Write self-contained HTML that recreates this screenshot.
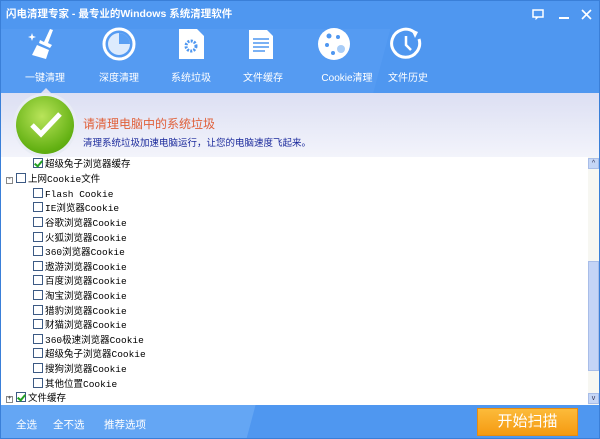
<!DOCTYPE html>
<html><head><meta charset="utf-8"><style>
*{margin:0;padding:0;box-sizing:border-box}
body{width:600px;height:439px;overflow:hidden;font-family:"Liberation Sans","Noto Sans CJK SC",sans-serif;position:relative;background:#fff}
.top{position:absolute;left:0;top:0;width:600px;height:93px;background:#4f97f0;border:1px solid #3a7fd8;border-bottom:none;overflow:hidden}
.title{position:absolute;left:5px;top:5px;color:#fff;font-size:10.5px;font-weight:bold}
.tab{position:absolute;top:68px;width:80px;text-align:center;color:#fff;font-size:10px;transform:translateX(-40px)}
.ic{position:absolute;top:26px;transform:translateX(-17px)}
.head{position:absolute;left:0;top:93px;width:600px;height:64px;background:linear-gradient(#dcdff3,#f3f4fb);border-left:1px solid #3a7fd8;border-right:1px solid #3a7fd8}
.list{position:absolute;left:0;top:157px;width:600px;height:248px;background:#fff;border-left:1px solid #3a7fd8;border-right:1px solid #3a7fd8}
.row{position:absolute;height:14px;font-size:9.5px;color:#000;font-family:"Liberation Mono","Noto Sans CJK SC",monospace;line-height:14px;white-space:nowrap}
.cb{display:inline-block;width:10px;height:10px;border:1px solid #3c5a84;background:#fff;vertical-align:-1px;margin-right:2px;position:relative}
.ck:after{content:"";position:absolute;left:2px;top:0px;width:3px;height:6px;border:solid #21a121;border-width:0 2px 2px 0;transform:rotate(40deg)}
.exp{display:inline-block;width:7px;height:7px;border:1px solid #888;font-size:7px;line-height:5px;text-align:center;margin-right:3px;vertical-align:1px;color:#333}
.foot{position:absolute;left:0;top:405px;width:600px;height:34px;background:#4f97f0;border:1px solid #3a7fd8;border-top:none;overflow:hidden}
.fl{position:absolute;top:12px;color:#fff;font-size:10.5px}
.btn{position:absolute;left:476px;top:3px;width:101px;height:28px;background:linear-gradient(#fcbb3a,#f59a12);border:1px solid #e78c10;color:#fff;font-size:15px;text-align:center;line-height:26px}
</style></head><body>
<div class="top">
<div style="position:absolute;left:-20px;top:28px;width:400px;height:70px;background:#559bf2;transform:skewX(-15deg)"></div>
<div class="title">闪电清理专家 - 最专业的Windows 系统清理软件</div>
<svg style="position:absolute;left:531px;top:8px" width="12" height="11"><rect x="1" y="1" width="10" height="7" fill="none" stroke="#fff" stroke-width="1.5"/><path d="M4 8v2l2-2" fill="#fff" stroke="#fff"/></svg>
<div style="position:absolute;left:558px;top:16px;width:10px;height:2px;background:#fff"></div>
<svg style="position:absolute;left:580px;top:8px" width="11" height="11"><path d="M1 1L10 10M10 1L1 10" stroke="#fff" stroke-width="1.6"/></svg>
<svg class="ic" style="left:44px" width="34" height="34"><path d="M22 2l3 1-5 13 4 2-2 3-11-5 1-3 4 2z" fill="#fff"/><path d="M9 18l12 5-3 9-14-4z" fill="#fff"/><path d="M4 6l1 3 3 1-3 1-1 3-1-3-3-1 3-1z" fill="#fff"/></svg>
<svg class="ic" style="left:118px" width="34" height="34"><circle cx="17" cy="17" r="15" fill="none" stroke="#fff" stroke-width="3"/><circle cx="17" cy="17" r="11" fill="#fff" opacity=".8"/><path d="M17 6a11 11 0 0 1 11 11H17z" fill="#5a9ff3"/></svg>
<svg class="ic" style="left:190px" width="34" height="34"><path d="M5 2h18l7 7v23H5z" fill="#fff"/><circle cx="17" cy="19" r="5" fill="none" stroke="#4f97f0" stroke-width="3" stroke-dasharray="2 1.3"/></svg>
<svg class="ic" style="left:261px" width="34" height="34"><path d="M4 3h18l6 6v23H4z" fill="#fff"/><path d="M8 12h16M8 16h16M8 20h16M8 24h12" stroke="#4f97f0" stroke-width="1.5"/></svg>
<svg class="ic" style="left:333px" width="34" height="34"><circle cx="17" cy="17" r="16" fill="#fff"/><circle cx="12" cy="9" r="2.5" fill="#4f97f0"/><circle cx="21" cy="10" r="2" fill="#4f97f0"/><circle cx="10" cy="18" r="2" fill="#4f97f0"/><circle cx="24" cy="22" r="4" fill="#a9cdf7"/><circle cx="16" cy="26" r="2" fill="#4f97f0"/></svg>
<svg class="ic" style="left:406px" width="34" height="34"><path d="M29 12A14 14 0 1 1 24 5" fill="none" stroke="#fff" stroke-width="3"/><path d="M21 2l7 3-3 6z" fill="#fff"/><path d="M16 9v9l5 5" fill="none" stroke="#fff" stroke-width="2.5"/></svg>
<div class="tab" style="left:44px">一键清理</div>
<div class="tab" style="left:118px">深度清理</div>
<div class="tab" style="left:190px">系统垃圾</div>
<div class="tab" style="left:262px">文件缓存</div>
<div class="tab" style="left:346px">Cookie清理</div>
<div class="tab" style="left:407px">文件历史</div>
<div style="position:absolute;left:39px;top:87px;width:0;height:0;border:6px solid transparent;border-bottom-color:#dcdff3;border-top:none"></div>
</div>
<div class="head">
<div style="position:absolute;left:15px;top:3px;width:58px;height:58px;border-radius:50%;background:radial-gradient(circle at 45% 35%,#b9e45a,#62b012 70%,#4d9a0c);box-shadow:0 0 0 3px #e8ecf4"></div>
<svg style="position:absolute;left:29px;top:18px" width="32" height="28"><path d="M2 14l9 9L30 3" fill="none" stroke="#fff" stroke-width="5"/></svg>
<div style="position:absolute;left:82px;top:22px;color:#e0603a;font-size:12px">请清理电脑中的系统垃圾</div>
<div style="position:absolute;left:82px;top:42px;color:#1b2a9c;font-size:9.5px">清理系统垃圾加速电脑运行，让您的电脑速度飞起来。</div>
</div>
<div class="list">
<div style="position:absolute;left:587px;top:0;width:11px;height:248px;background:#f7f7f2"></div>
<div style="position:absolute;left:587px;top:1px;width:11px;height:11px;background:#c5d6f6;border:1px solid #a8bde8;font-size:7px;text-align:center;line-height:9px;color:#335">^</div>
<div style="position:absolute;left:587px;top:104px;width:11px;height:110px;background:#c4d4f6;border:1px solid #a8bde8"></div>
<div style="position:absolute;left:587px;top:236px;width:11px;height:11px;background:#c5d6f6;border:1px solid #a8bde8;font-size:7px;text-align:center;line-height:9px;color:#335">v</div>
</div>
<div class="row" style="left:33px;top:158px"><span class="cb ck"></span>超级兔子浏览器缓存</div>
<div class="row" style="left:6px;top:173px"><span class="exp">-</span><span class="cb"></span>上网Cookie文件</div>
<div class="row" style="left:33px;top:188px"><span class="cb"></span>Flash Cookie</div>
<div class="row" style="left:33px;top:202px"><span class="cb"></span>IE浏览器Cookie</div>
<div class="row" style="left:33px;top:217px"><span class="cb"></span>谷歌浏览器Cookie</div>
<div class="row" style="left:33px;top:232px"><span class="cb"></span>火狐浏览器Cookie</div>
<div class="row" style="left:33px;top:246px"><span class="cb"></span>360浏览器Cookie</div>
<div class="row" style="left:33px;top:261px"><span class="cb"></span>遨游浏览器Cookie</div>
<div class="row" style="left:33px;top:275px"><span class="cb"></span>百度浏览器Cookie</div>
<div class="row" style="left:33px;top:290px"><span class="cb"></span>淘宝浏览器Cookie</div>
<div class="row" style="left:33px;top:305px"><span class="cb"></span>猎豹浏览器Cookie</div>
<div class="row" style="left:33px;top:319px"><span class="cb"></span>财猫浏览器Cookie</div>
<div class="row" style="left:33px;top:334px"><span class="cb"></span>360极速浏览器Cookie</div>
<div class="row" style="left:33px;top:348px"><span class="cb"></span>超级兔子浏览器Cookie</div>
<div class="row" style="left:33px;top:363px"><span class="cb"></span>搜狗浏览器Cookie</div>
<div class="row" style="left:33px;top:378px"><span class="cb"></span>其他位置Cookie</div>
<div class="row" style="left:6px;top:392px"><span class="exp">+</span><span class="cb ck"></span>文件缓存</div>
<div class="foot">
<div style="position:absolute;left:-20px;top:0;width:270px;height:34px;background:#64a6f4;transform:skewX(-15deg)"></div>
<div class="fl" style="left:15px">全选</div>
<div class="fl" style="left:52px">全不选</div>
<div class="fl" style="left:103px">推荐选项</div>
<div class="btn">开始扫描</div>
</div>
</body></html>
